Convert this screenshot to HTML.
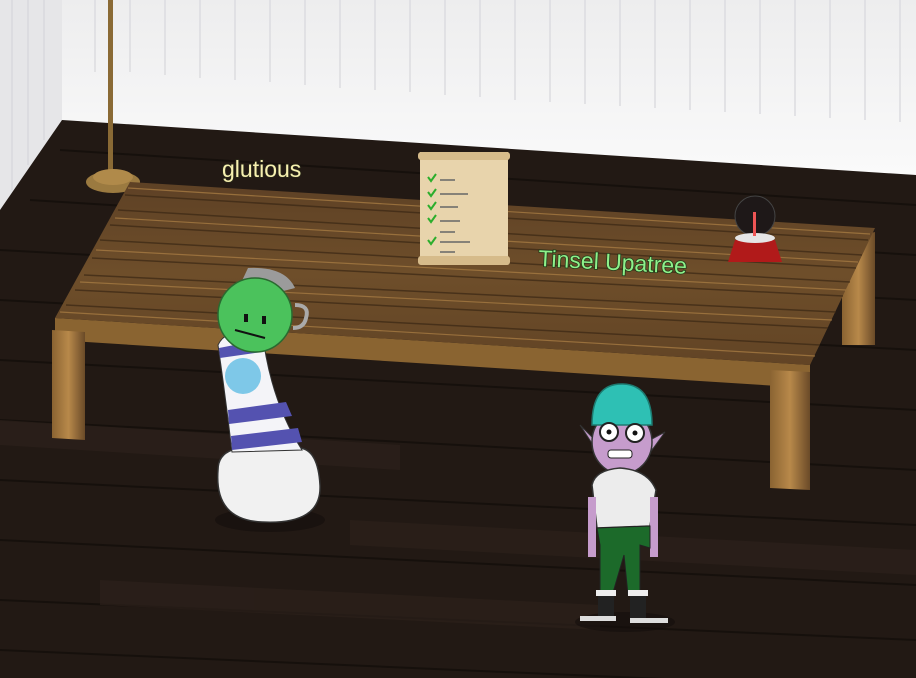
<!DOCTYPE html>
<html><head><meta charset="utf-8"><style>
html,body{margin:0;padding:0;background:#221914;overflow:hidden}
svg{display:block}
text{font-family:"Liberation Sans",sans-serif;paint-order:stroke}
</style></head><body>
<svg width="916" height="678" viewBox="0 0 916 678" xmlns="http://www.w3.org/2000/svg">
<defs>
<linearGradient id="wall" x1="0" y1="0" x2="0" y2="1"><stop offset="0" stop-color="#ededee"/><stop offset="1" stop-color="#fafafa"/></linearGradient>
<linearGradient id="top" x1="0" y1="0" x2="0" y2="1"><stop offset="0" stop-color="#5e4125"/><stop offset="0.5" stop-color="#6e4e2a"/><stop offset="1" stop-color="#624425"/></linearGradient>
<linearGradient id="leg" x1="0" y1="0" x2="1" y2="0"><stop offset="0" stop-color="#8a6332"/><stop offset="0.5" stop-color="#b8894a"/><stop offset="1" stop-color="#6a4a28"/></linearGradient>
</defs>
<rect width="916" height="678" fill="#221914"/>
<g stroke="#15100c" stroke-width="2" opacity="0.9">
<path d="M0 250 L916 300 M0 300 L916 350 M0 360 L916 410 M0 420 L916 470 M0 480 L916 525 M0 540 L916 585 M0 600 L916 640 M0 650 L916 690 M60 150 L916 205 M30 200 L916 255"/>
</g>
<g fill="#2c211b" opacity="0.7">
<polygon points="0,420 400,445 400,470 0,445"/><polygon points="350,520 916,550 916,575 350,545"/><polygon points="100,580 600,605 600,630 100,605"/>
</g>
<polygon points="62,0 916,0 916,175 62,120" fill="url(#wall)"/>
<g stroke="#dcdce0" stroke-width="1.5">
<path d="M95 0V72 M130 0V72 M165 0V75 M200 0V78 M235 0V80 M270 0V82 M305 0V85 M340 0V88 M375 0V90 M410 0V92 M445 0V95 M480 0V97 M515 0V100 M550 0V102 M585 0V104 M620 0V106 M655 0V108 M690 0V110 M725 0V112 M760 0V114 M795 0V116 M830 0V118 M865 0V120 M900 0V122"/>
</g>
<polygon points="0,0 62,0 62,120 0,210" fill="#e6e6e8"/>
<g stroke="#d3d3d7"><path d="M12 0V190 M28 0V165 M44 0V140"/></g>
<rect x="108" y="0" width="5" height="170" fill="#8a6a35"/>
<ellipse cx="113" cy="182" rx="27" ry="11" fill="#9b7a40"/>
<ellipse cx="113" cy="177" rx="20" ry="8" fill="#b08a4a"/>
<polygon points="842,240 875,232 875,345 842,345" fill="url(#leg)"/>
<polygon points="55,318 810,365 810,388 55,340" fill="#8a6431"/>
<polygon points="130,182 875,228 810,365 55,318" fill="url(#top)"/>
<g stroke="#3a2714" stroke-width="1.5" opacity="0.7">
<path d="M125 195 L868 240 M118 210 L862 255 M110 225 L856 268 M100 240 L850 282 M92 258 L843 296 M84 275 L836 312 M75 290 L828 328 M66 305 L820 345"/>
</g>
<g stroke="#a57a42" stroke-width="1.2" opacity="0.8">
<path d="M128 188 L870 234 M115 218 L858 262 M96 250 L846 290 M80 282 L832 320 M60 312 L815 356"/>
</g>
<polygon points="52,330 85,332 85,440 52,438" fill="url(#leg)"/>
<polygon points="770,370 810,372 810,490 770,488" fill="url(#leg)"/>
<text x="222" y="177" font-size="23" fill="#f7f0b0" stroke="#2a2a1a" stroke-width="1.5">glutious</text>
<text x="538" y="266" font-size="23" fill="#8ef08a" stroke="#1e3a18" stroke-width="1.5" transform="rotate(3 538 266)">Tinsel Upatree</text>
<rect x="420" y="152" width="88" height="112" fill="#e8d4ac"/>
<rect x="418" y="152" width="92" height="8" rx="3" fill="#d6bb8a"/>
<rect x="418" y="256" width="92" height="9" rx="3" fill="#d6bb8a"/>
<g stroke="#2cae2c" stroke-width="2" fill="none">
<path d="M428 177l3 4 5-7 M428 192l3 4 5-7 M428 205l3 4 5-7 M428 218l3 4 5-7 M428 240l3 4 5-7"/></g>
<g stroke="#666" stroke-width="1.5"><path d="M440 180h15 M440 194h28 M440 207h18 M440 221h20 M440 232h15 M440 242h30 M440 252h15"/></g>
<circle cx="755" cy="216" r="20" fill="#1e1818" stroke="#444"/>
<polygon points="735,240 775,240 782,262 728,262" fill="#b11a1a"/>
<ellipse cx="755" cy="238" rx="20" ry="5" fill="#e5e5e5"/>
<rect x="753" y="212" width="3" height="24" fill="#e55"/>
<ellipse cx="270" cy="520" rx="55" ry="12" fill="#140e0b" opacity="0.6"/>
<path d="M218 470 Q214 520 262 522 Q322 525 320 485 Q318 450 300 448 L232 450 Q218 455 218 470Z" fill="#f1f1f1" stroke="#333" stroke-width="1.5"/>
<path d="M218 345 Q225 330 250 330 L262 330 Q270 400 302 450 L232 452 Q226 400 218 345Z" fill="#f4f4f8" stroke="#333" stroke-width="1"/>
<g fill="#5452b0"><path d="M219 348 L260 340 L262 352 L220 358Z M228 410 L286 402 L292 416 L229 424Z M231 436 L298 428 L302 442 L232 450Z"/></g>
<circle cx="243" cy="376" r="18" fill="#7ec8e8"/>
<path d="M240 285 L248 268 Q285 266 295 288 L268 295Z" fill="#9b9b9b"/>
<path d="M295 305 Q310 305 306 318 Q304 328 293 328" fill="none" stroke="#aaa" stroke-width="4"/>
<circle cx="255" cy="315" r="37" fill="#4bc25c" stroke="#2a6a30" stroke-width="1.5"/>
<rect x="244" y="314" width="4" height="8" fill="#111"/><rect x="262" y="316" width="4" height="8" fill="#111"/>
<path d="M235 330 L265 338" stroke="#111" stroke-width="2"/>
<ellipse cx="625" cy="622" rx="50" ry="10" fill="#140e0b" opacity="0.6"/>
<path d="M580 425 L595 440 L595 448 Z" fill="#c69ccc" stroke="#333"/>
<path d="M665 432 L652 450 L650 440 Z" fill="#c69ccc" stroke="#333"/>
<ellipse cx="622" cy="442" rx="30" ry="32" fill="#c69ccc" stroke="#333" stroke-width="1.5"/>
<path d="M592 425 Q592 383 623 384 Q652 385 652 425 Z" fill="#2ec0b4" stroke="#1d7a70" stroke-width="1.5"/>
<circle cx="609" cy="432" r="9" fill="#fff" stroke="#222" stroke-width="2"/><circle cx="635" cy="433" r="9" fill="#fff" stroke="#222" stroke-width="2"/>
<circle cx="609" cy="432" r="2.5" fill="#111"/><circle cx="635" cy="433" r="2.5" fill="#111"/>
<rect x="608" y="450" width="24" height="8" rx="3" fill="#fff" stroke="#222"/>
<path d="M592 485 Q595 470 620 468 Q648 470 656 490 L650 526 L597 528Z" fill="#ececec" stroke="#333" stroke-width="1.5"/>
<rect x="588" y="497" width="8" height="60" fill="#c69ccc"/><rect x="650" y="497" width="8" height="60" fill="#c69ccc"/>
<path d="M597 528 L650 526 L650 548 L640 545 L640 595 L628 595 L624 555 L612 596 L600 596 L600 545Z" fill="#1c6a2a" stroke="#222"/>
<rect x="598" y="592" width="16" height="28" fill="#222"/><rect x="630" y="592" width="16" height="28" fill="#222"/>
<rect x="596" y="590" width="20" height="6" fill="#eee"/><rect x="628" y="590" width="20" height="6" fill="#eee"/>
<rect x="580" y="616" width="36" height="5" fill="#ddd"/><rect x="630" y="618" width="38" height="5" fill="#ddd"/>
</svg>
</body></html>
